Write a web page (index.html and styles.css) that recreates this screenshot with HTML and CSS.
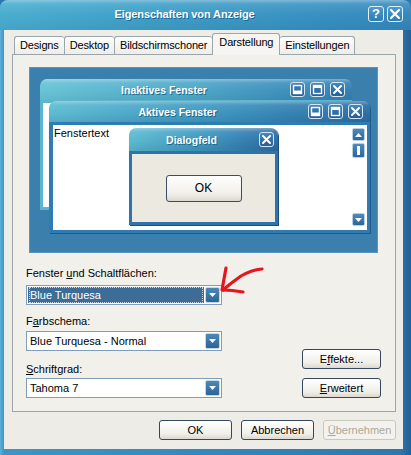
FILE: index.html
```html
<!DOCTYPE html>
<html lang="de">
<head>
    <meta charset="UTF-8">
    <title>Eigenschaften von Anzeige</title>
    <link rel="stylesheet" href="styles.css">
</head>
<body>

<div class="window">
    <div class="titlebar">
        <span class="title">Eigenschaften von Anzeige</span>
        <span class="cap-btn help">?</span>
        <span class="cap-btn">
            <svg width="12" height="12" viewBox="0 0 12 12"><path d="M2 2 L10 10 M10 2 L2 10" stroke="#fff" stroke-width="2.2" stroke-linecap="round"/></svg>
        </span>
    </div>

    <div class="client">
        <div class="tabs">
            <span class="tab">Designs</span>
            <span class="tab">Desktop</span>
            <span class="tab">Bildschirmschoner</span>
            <span class="tab active">Darstellung</span>
            <span class="tab">Einstellungen</span>
        </div>

        <div class="panel">
            <!-- Vorschau: die Fenster liegen frei auf dem "Desktop" -->
            <div class="preview">
                <div class="pwin inactive-win">
                    <div class="pwin-title">
                        <span class="pwin-caption">Inaktives Fenster</span>
                        <span class="pbtn"><svg width="11" height="11" viewBox="0 0 11 11"><rect x="1.5" y="1.5" width="8" height="8" fill="none" stroke="#fff" stroke-width="1.4"/><rect x="1.5" y="6.5" width="8" height="3" fill="#fff"/></svg></span>
                        <span class="pbtn"><svg width="11" height="11" viewBox="0 0 11 11"><rect x="1.5" y="1.5" width="8" height="8" fill="none" stroke="#fff" stroke-width="1.4"/><rect x="1.5" y="1.5" width="8" height="2.5" fill="#fff"/></svg></span>
                        <span class="pbtn"><svg width="11" height="11" viewBox="0 0 11 11"><path d="M2 2 L9 9 M9 2 L2 9" stroke="#fff" stroke-width="2" stroke-linecap="round"/></svg></span>
                    </div>
                    <div class="pwin-body"></div>
                </div>

                <div class="pwin active-win">
                    <div class="pwin-title">
                        <span class="pwin-caption">Aktives Fenster</span>
                        <span class="pbtn"><svg width="11" height="11" viewBox="0 0 11 11"><rect x="1.5" y="1.5" width="8" height="8" fill="none" stroke="#fff" stroke-width="1.4"/><rect x="1.5" y="6.5" width="8" height="3" fill="#fff"/></svg></span>
                        <span class="pbtn"><svg width="11" height="11" viewBox="0 0 11 11"><rect x="1.5" y="1.5" width="8" height="8" fill="none" stroke="#fff" stroke-width="1.4"/><rect x="1.5" y="1.5" width="8" height="2.5" fill="#fff"/></svg></span>
                        <span class="pbtn"><svg width="11" height="11" viewBox="0 0 11 11"><path d="M2 2 L9 9 M9 2 L2 9" stroke="#fff" stroke-width="2" stroke-linecap="round"/></svg></span>
                    </div>
                    <div class="pwin-body">
                        <div class="win-text">Fenstertext</div>
                        <div class="scrollbar">
                            <span class="sb-btn"><svg width="7" height="4" viewBox="0 0 7 4"><path d="M0 4 L3.5 0 L7 4 Z" fill="#fff"/></svg></span>
                            <span class="sb-btn thumb"><span class="grip"></span></span>
                            <span class="sb-space"></span>
                            <span class="sb-btn"><svg width="7" height="4" viewBox="0 0 7 4"><path d="M0 0 L3.5 4 L7 0 Z" fill="#fff"/></svg></span>
                        </div>
                    </div>
                </div>

                <div class="pwin dialog-win">
                    <div class="pwin-title">
                        <span class="pwin-caption">Dialogfeld</span>
                        <span class="pbtn"><svg width="11" height="11" viewBox="0 0 11 11"><path d="M2 2 L9 9 M9 2 L2 9" stroke="#fff" stroke-width="2" stroke-linecap="round"/></svg></span>
                    </div>
                    <div class="pwin-body">
                        <span class="btn dialog-ok">OK</span>
                    </div>
                </div>
            </div>

            <div class="settings">
                <div class="fields">
                    <div class="label first">Fenster <u>u</u>nd Schaltflächen:</div>
                    <div class="combo selected">
                        <span class="combo-text"><span class="focus">Blue Turquesa</span></span>
                        <span class="combo-btn"><svg width="7" height="4" viewBox="0 0 7 4"><path d="M0 0 L3.5 4 L7 0 Z" fill="#fff"/></svg></span>
                    </div>
                    <div class="label second">F<u>a</u>rbschema:</div>
                    <div class="combo">
                        <span class="combo-text">Blue Turquesa - Normal</span>
                        <span class="combo-btn"><svg width="7" height="4" viewBox="0 0 7 4"><path d="M0 0 L3.5 4 L7 0 Z" fill="#fff"/></svg></span>
                    </div>
                    <div class="label third"><u>S</u>chriftgrad:</div>
                    <div class="combo">
                        <span class="combo-text">Tahoma 7</span>
                        <span class="combo-btn"><svg width="7" height="4" viewBox="0 0 7 4"><path d="M0 0 L3.5 4 L7 0 Z" fill="#fff"/></svg></span>
                    </div>
                </div>
                <div class="side-btns">
                    <span class="btn">E<u>f</u>fekte...</span>
                    <span class="btn"><u>E</u>rweitert</span>
                </div>
            </div>
        </div>

        <div class="footer">
            <span class="btn">OK</span>
            <span class="btn">Abbrechen</span>
            <span class="btn disabled"><u>Ü</u>bernehmen</span>
        </div>
    </div>

    <svg class="arrow" width="56" height="36" viewBox="0 0 56 36">
        <path d="M47 7 Q36 8 26 14 Q16 21 8 28" fill="none" stroke="#e8161c" stroke-width="3.2" stroke-linecap="round"/>
        <path d="M11 6 Q9 17 7 28 Q17 28 28 30" fill="none" stroke="#e8161c" stroke-width="3.2" stroke-linecap="round" stroke-linejoin="round"/>
    </svg>
</div>

</body>
</html>
```

FILE: styles.css
```css
* {
    box-sizing: border-box;
}

body {
    margin: 0;
    font-family: "Liberation Sans", Arial, sans-serif;
    font-size: 11px;
    color: #000;
    background: #2a78ae;
}

u {
    text-underline-offset: 1px;
}

/* outer window */
.window {
    position: relative;
    width: 411px;
    height: 455px;
    display: flex;
    flex-direction: column;
    padding-bottom: 6px;
    border-radius: 8px 8px 0 0;
    background: linear-gradient(90deg, #5cb0d8 0, #3d95c6 4px, #3389bf 50%, #2c78b0 400px, #215f95 411px);
}

.titlebar {
    height: 30px;
    display: flex;
    align-items: center;
    padding: 0 8px 3px 4px;
    border-radius: 8px 8px 0 0;
    background:
        linear-gradient(180deg, rgba(255, 255, 255, .35) 0, rgba(255, 255, 255, .1) 4px, rgba(255, 255, 255, 0) 14px, rgba(0, 0, 0, .06) 30px),
        linear-gradient(90deg, #4aaed0 0, #3d9dc7 45%, #3489bd 100%);
}

.title {
    flex: 1;
    text-align: center;
    color: #fff;
    font-weight: bold;
    font-size: 11px;
    letter-spacing: -0.1px;
    text-shadow: 1px 1px 0 #1d6590;
}

.cap-btn {
    width: 16px;
    height: 16px;
    margin-left: 3px;
    display: flex;
    align-items: center;
    justify-content: center;
    border: 1px solid #e4f0f6;
    border-radius: 3px;
    background: linear-gradient(#4b9ccc, #2e7cb2);
    color: #fff;
    font-weight: bold;
    font-size: 12px;
}

.cap-btn.help {
    font-size: 13px;
}

.client {
    flex: 1;
    margin: 0 8px 0 4px;
    background: #eeece6;
    display: flex;
    flex-direction: column;
}

/* tabs */
.tabs {
    display: flex;
    align-items: flex-end;
    height: 21px;
    margin: 3px 0 0 10px;
    position: relative;
    z-index: 1;
    letter-spacing: -0.15px;
}

.tab {
    height: 18px;
    padding: 0 5px;
    line-height: 17px;
    border: 1px solid #9aa6ab;
    border-bottom: none;
    border-right: none;
    border-radius: 3px 3px 0 0;
    background: linear-gradient(#fdfdfc, #eeede8);
}

.tab:last-child {
    border-right: 1px solid #9aa6ab;
}

.tab.active {
    height: 22px;
    margin-bottom: -1px;
    padding: 0 6px;
    line-height: 17px;
    border-right: 1px solid #9aa6ab;
    background: #f6f5f1;
}

.tab.active + .tab {
    border-left: none;
}

.panel {
    margin-left: 8px;
    width: 384px;
    height: 358px;
    border: 1px solid #9aa6ab;
    background: #f1f0eb;
    padding-top: 12px;
}

/* preview desktop */
.preview {
    position: relative;
    margin-left: 16px;
    width: 349px;
    height: 186px;
    background: #3b80ad;
    border: 1px solid #5a94bd;
    overflow: hidden;
}

.pwin {
    position: absolute;
    display: flex;
    flex-direction: column;
    border-radius: 7px 7px 0 0;
}

.pwin-title {
    height: 21px;
    display: flex;
    align-items: center;
    padding: 0 7px 0 3px;
    border-radius: 7px 7px 0 0;
    color: #fff;
    font-weight: bold;
    font-size: 10.5px;
    background:
        linear-gradient(180deg, rgba(255, 255, 255, .35) 0, rgba(255, 255, 255, .08) 4px, rgba(255, 255, 255, 0) 12px, rgba(0, 0, 0, .08) 21px),
        linear-gradient(90deg, #5cbcd2 0, #3f98c2 50%, #2d6ea6 100%);
}

.pwin-caption {
    flex: 1;
    text-align: center;
    text-shadow: 1px 1px 0 #1f6a8a;
}

.pbtn {
    width: 15px;
    height: 15px;
    margin-left: 5px;
    display: flex;
    align-items: center;
    justify-content: center;
    border: 1px solid #d6e6ef;
    border-radius: 3px;
    background: linear-gradient(#4487bb, #255f97);
}

.pwin-body {
    flex: 1;
    display: flex;
    border: 3px solid #3a8cbc;
    border-top-width: 3px;
    background: #fff;
}

.inactive-win {
    left: 10px;
    top: 11px;
    width: 312px;
    height: 131px;
}

.inactive-win .pwin-title {
    background:
        linear-gradient(180deg, rgba(255, 255, 255, .35) 0, rgba(255, 255, 255, .08) 4px, rgba(255, 255, 255, 0) 12px, rgba(0, 0, 0, .06) 21px),
        linear-gradient(90deg, #68c4d6 0, #4ea7c8 50%, #3480b3 100%);
}

.inactive-win .pwin-body {
    border-color: #5ab7cd;
}

.active-win {
    left: 19px;
    top: 33px;
    width: 321px;
    height: 132px;
    box-shadow: 1px 1px 0 #1f5a8e;
}

.active-win .pwin-body {
    border-width: 3px 3px 3px 4px;
    border-color: #2f7bb3;
}

.win-text {
    flex: 1;
    padding: 2px 0 0 1px;
}

.scrollbar {
    width: 13px;
    margin: 3px 2px 4px 0;
    display: flex;
    flex-direction: column;
}

.sb-btn {
    height: 13px;
    display: flex;
    align-items: center;
    justify-content: center;
    border: 1px solid #b7cfe0;
    border-radius: 2px;
    background: linear-gradient(#4a8cbf, #2a669d);
}

.sb-btn.thumb {
    margin-top: 2px;
    height: 15px;
}

.grip {
    width: 3px;
    height: 9px;
    background: #fff;
}

.sb-space {
    flex: 1;
}

.dialog-win {
    left: 99px;
    top: 60px;
    width: 149px;
    height: 97px;
    box-shadow: 1px 1px 0 #1a4f80;
}

.dialog-win .pwin-title {
    height: 23px;
    padding: 0 4px 0 0;
}

.dialog-win .pwin-body {
    align-items: center;
    justify-content: center;
    border-color: #2e73ab;
    background: #ece9e1;
}

/* form area */
.settings {
    display: flex;
    align-items: flex-end;
    justify-content: space-between;
    padding: 0 14px 0 13px;
}

.label {
    line-height: 13px;
}

.label.first {
    margin-top: 14px;
    margin-bottom: 5px;
}

.label.second {
    margin-top: 10px;
    margin-bottom: 3px;
}

.label.third {
    margin-top: 12px;
    margin-bottom: 2px;
}

.combo {
    width: 196px;
    height: 20px;
    display: flex;
    padding: 1px 1px 1px 1px;
    border: 1px solid #7f9db9;
    background: #fff;
}

.combo-text {
    flex: 1;
    padding-left: 2px;
    line-height: 16px;
}

.combo.selected .combo-text {
    margin-right: 1px;
    padding: 0 1px;
    background: #3d6c97;
    color: #fff;
}

.focus {
    display: block;
    height: 16px;
    padding-left: 1px;
    outline: 1px dotted #c9d6e2;
    outline-offset: -1px;
}

.combo-btn {
    width: 15px;
    display: flex;
    align-items: center;
    justify-content: center;
    border: 1px solid #c7d7e4;
    border-radius: 2px;
    background: linear-gradient(#4b88b9, #2c649a);
}

.side-btns {
    display: flex;
    flex-direction: column;
    gap: 9px;
}

.btn {
    display: flex;
    align-items: center;
    justify-content: center;
    width: 79px;
    height: 20px;
    border: 1px solid #34475c;
    border-radius: 3px;
    background: linear-gradient(#ffffff, #f0efea 70%, #dcd8cf);
}

.dialog-ok {
    width: 76px;
    height: 27px;
    font-size: 12px;
    border-color: #3c4e63;
}

.footer {
    display: flex;
    justify-content: flex-end;
    gap: 9px;
    margin: 8px 7px 0 0;
}

.footer .btn {
    width: 73px;
    height: 20px;
}

.btn.disabled {
    color: #aca899;
    border-color: #cac8bb;
    background: #f3f2ee;
}

/* red hand-drawn arrow, lies over the window */
.arrow {
    position: absolute;
    left: 215px;
    top: 262px;
}
```
